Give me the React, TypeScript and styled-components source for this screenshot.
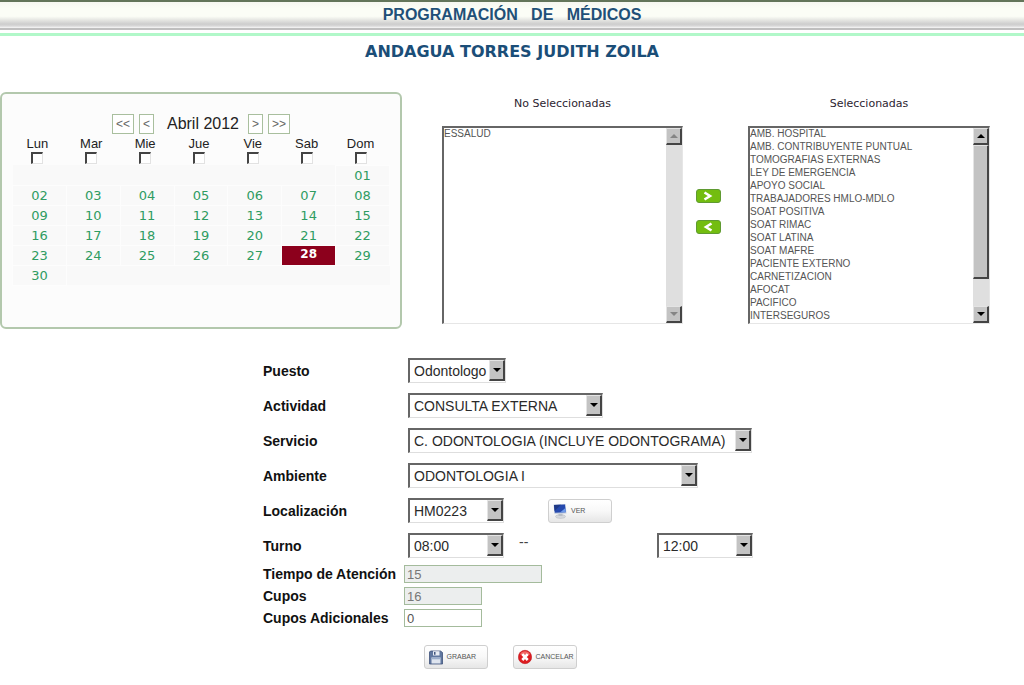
import React, { useState } from "react";
import styled, { createGlobalStyle, css } from "styled-components";

const sans = `"Liberation Sans", Arial, sans-serif`;
const wide = `"DejaVu Sans", Verdana, sans-serif`;

const GlobalStyle = createGlobalStyle`
  *, *::before, *::after { box-sizing: border-box; }
  body { margin: 0; background: #fff; font-family: ${sans}; color: #111; }
  button { font-family: inherit; cursor: pointer; }
`;

const Page = styled.div`
  min-height: 100vh;
`;

const TopBar = styled.header`
  display: flex;
  align-items: center;
  justify-content: center;
  height: 28px;
  border-top: 2px solid #63755a;
  background: linear-gradient(#f6f7f1 0%, #fbfdf6 25%, #fbfdf6 55%, #cdcdcd 85%, #d8d8d8 92%, #f8f8f8 100%);
`;

const Title = styled.h1`
  margin: 0;
  font-size: 16px;
  line-height: 20px;
  font-weight: bold;
  color: #1f5078;
  white-space: pre-wrap;
`;

const Rules = styled.div`
  height: 8px;
  border-top: 2px solid #bfbfbf;
  border-bottom: 3px solid #b1f8c9;
  background: #fff;
`;

const Doctor = styled.h2`
  margin: 0;
  padding: 6px 0 0;
  font-family: ${wide};
  font-size: 16px;
  line-height: 20px;
  text-align: center;
  color: #1b4e78;
`;

const Upper = styled.section`
  display: grid;
  grid-template-columns: 402fr 281fr 65fr 242fr;
  align-items: start;
  padding-right: 34px;
  margin-top: 30px;
`;

const CalendarPanel = styled.section`
  height: 237px;
  padding: 20px 10px 0;
  border: 2px solid #b3c8ad;
  border-radius: 6px;
  background: #fcfcfc;
`;

const MonthNav = styled.div`
  display: flex;
  justify-content: center;
  align-items: center;
  gap: 5px;
  height: 20px;
`;

const NavButton = styled.button`
  height: 20px;
  padding: 0 3px;
  border: 1px solid #a9bf9e;
  background: #fff;
  color: #666;
  font-family: ${sans};
  font-size: 12px;
  line-height: 18px;
`;

const Month = styled.span`
  padding: 0 4px 0 8px;
  font-size: 16px;
  line-height: 20px;
  color: #222;
`;

const Days = styled.table`
  width: 100%;
  table-layout: fixed;
  border-collapse: collapse;
`;

const DayHead = styled.th`
  height: 31px;
  padding: 2px 4px 0 0;
  vertical-align: top;
  font-size: 13px;
  line-height: 16px;
  font-weight: normal;
  color: #222;

  label {
    display: flex;
    flex-direction: column;
    align-items: center;
  }
`;

const Tick = styled.input`
  appearance: none;
  width: 12px;
  height: 12px;
  margin: 0;
  border: 1px solid #e2e2e2;
  border-top: 2px solid #444;
  border-left: 2px solid #444;
  background: #fff;

  &:checked { background: #63755a; }
`;

const DayCell = styled.td<{ $empty?: boolean }>`
  height: 20px;
  padding: 0;
  background: #f9f9f9;
  ${(p) => !p.$empty && css`border: 1px solid #fdfdfd;`}
`;

const DayButton = styled.button<{ $on: boolean }>`
  display: block;
  width: 100%;
  height: 19px;
  padding: 0;
  border: 0;
  background: transparent;
  font-family: ${wide};
  font-size: 13px;
  line-height: 19px;
  color: #2f9c62;
  ${(p) =>
    p.$on &&
    css`
      padding-bottom: 2px;
      background: #8c001c;
      color: #fff;
      font-size: 12px;
      line-height: 17px;
      font-weight: bold;
    `}
`;

const ListColumn = styled.div<{ $indent?: boolean }>`
  display: flex;
  flex-direction: column;
  min-width: 0;
  padding-top: 4px;
  padding-left: ${(p) => (p.$indent ? 40 : 0)}px;
`;

const ListTitle = styled.label`
  margin-bottom: 14px;
  font-family: ${wide};
  font-size: 11px;
  line-height: 16px;
  text-align: center;
  color: #2c2430;
`;

const ListFrame = styled.div`
  display: flex;
  height: 198px;
  border: 1px solid #e6e6e6;
  border-top: 2px solid #666;
  border-left: 2px solid #666;
  background: #fff;
`;

const List = styled.select`
  flex: 1;
  min-width: 0;
  padding: 0;
  border: 0;
  border-radius: 0;
  outline: 0;
  background: #fff;
  font-family: ${sans};
  font-size: 10px;
  scrollbar-width: none;

  option {
    height: 13px;
    min-height: 13px;
    padding: 0;
    line-height: 13px;
    color: #555;
  }
`;

const Scroll = styled.div`
  display: flex;
  flex-direction: column;
  flex: none;
  width: 16px;
  background: #dfdfdf;
`;

const raised = css`
  border: 1px solid #e4e4e4;
  border-right: 2px solid #444;
  border-bottom: 2px solid #444;
  background: #c3c3c3;
`;

const ScrollCap = styled.span`
  display: flex;
  align-items: center;
  justify-content: center;
  height: 17px;
  ${raised}
`;

const ScrollTrack = styled.div`
  flex: 1;
`;

const ScrollThumb = styled.div`
  height: 83%;
  ${raised}
`;

const Movers = styled.div`
  display: flex;
  flex-direction: column;
  align-items: center;
  gap: 17px;
  padding: 97px 15px 0 0;
`;

const MoveButton = styled.button`
  display: flex;
  align-items: center;
  justify-content: center;
  width: 25px;
  height: 14px;
  padding: 0;
  border: 1px solid #5f9a32;
  border-radius: 3px;
  background: #73bd10;
`;

const FormArea = styled.section`
  padding-right: 8px;
`;

const Form = styled.form`
  display: flex;
  flex-direction: column;
  width: 490px;
  max-width: 100%;
  margin: 24px auto 0;
`;

const Row = styled.div<{ $compact?: boolean }>`
  display: grid;
  grid-template-columns: 141px 1fr;
  align-items: center;
  height: ${(p) => (p.$compact ? 22 : 35)}px;
`;

const Label = styled.label`
  font-size: 14px;
  line-height: 20px;
  font-weight: bold;
  color: #111;
  white-space: nowrap;
`;

const Field = styled.div`
  display: flex;
  align-items: center;
  padding-left: 4px;
`;

const SelectFrame = styled.div<{ $width: number; $end?: boolean }>`
  display: flex;
  width: ${(p) => p.$width}px;
  height: 25px;
  padding-bottom: 1px;
  border: 1px solid #dedede;
  border-top: 2px solid #666;
  border-left: 2px solid #666;
  background: #fff;
  ${(p) => p.$end && css`margin-left: auto;`}
`;

const Select = styled.select`
  appearance: none;
  flex: 1;
  min-width: 0;
  padding: 0 0 0 4px;
  border: 0;
  border-radius: 0;
  outline: 0;
  background: transparent;
  font-family: ${sans};
  font-size: 14px;
  line-height: 20px;
  color: #2a2a2a;
`;

const DropCap = styled.span`
  display: flex;
  align-items: center;
  justify-content: center;
  flex: none;
  width: 16px;
  ${raised}
`;

const Dash = styled.span`
  padding: 0 0 8px 15px;
  font-size: 14px;
  line-height: 16px;
  color: #444;
`;

const TextBox = styled.input<{ $width: number }>`
  width: ${(p) => p.$width}px;
  height: 18px;
  padding: 0 2px;
  border: 1px solid #a4bb9c;
  border-radius: 0;
  outline: 0;
  background: #fff;
  font-family: ${sans};
  font-size: 13px;
  line-height: 16px;
  color: #555;

  &:read-only { background: #eceeee; color: #777; }
`;

const ImageButton = styled.button`
  display: flex;
  align-items: center;
  gap: 4px;
  width: 64px;
  height: 24px;
  padding: 0 0 0 4px;
  border: 1px solid #cfcfcf;
  border-radius: 3px;
  background: linear-gradient(#fff 0%, #f8f8f8 50%, #e6e6e6 100%);
  font-size: 7px;
  line-height: 8px;
  color: #555;

  svg { flex: none; }
`;

const ViewButton = styled(ImageButton)`
  margin-left: 44px;
`;

const Actions = styled.div`
  display: flex;
  justify-content: center;
  gap: 25px;
  margin-top: 16px;
  padding: 0 16px 16px 0;
`;

const Arrow = ({ up, dim }: { up?: boolean; dim?: boolean }) => (
  <svg width="8" height="4" viewBox="0 0 8 4" aria-hidden="true">
    <path d={up ? "M0 4L4 0L8 4Z" : "M0 0H8L4 4Z"} fill={dim ? "#858585" : "#000"} />
  </svg>
);

const Chevron = ({ left }: { left?: boolean }) => (
  <svg width="10" height="10" viewBox="0 0 10 10" aria-hidden="true">
    <path
      d={left ? "M8.500 1.500L3 5L8.500 8.500" : "M1.500 1.500L7 5L1.500 8.500"}
      fill="none"
      stroke="#fff"
      strokeWidth="2.6"
    />
  </svg>
);

const MonitorIcon = () => (
  <svg width="14" height="16" viewBox="0 0 14 16" aria-hidden="true">
    <ellipse cx="7.5" cy="13.5" rx="5" ry="1.9" fill="#d5d8dd" stroke="#b4b8be" strokeWidth=".5" />
    <path d="M5.500 10.500h4v2.500h-4z" fill="#b9bec6" />
    <path d="M.5 1.500L12.500 1L13.500 10.500L1.500 11Z" fill="#c7d0df" />
    <path d="M1 2L12 1.500L12.800 9.300L1.800 9.800Z" fill="#2549ae" />
    <path d="M1 2L8 1.700L1.600 8Z" fill="#203a86" />
    <path d="M7 9.500L12.400 5L12.800 9.300Z" fill="#6f9bea" />
  </svg>
);

const DiskIcon = () => (
  <svg width="14" height="15" viewBox="0 0 14 15" aria-hidden="true">
    <path d="M1.500 1H11.500L13.500 2.500V14H.5V2Z" fill="#60779f" stroke="#3f5278" strokeWidth=".8" />
    <path d="M4 1.200H10.500V5.500H4Z" fill="#e9edf4" />
    <path d="M5 2H6.500V4.700H5Z" fill="#42567e" />
    <path d="M2.500 7.500H11.500V13.500H2.500Z" fill="#dfe5ef" />
    <path d="M2.500 7.500H11.500V9.300H2.500Z" fill="#9caecb" />
  </svg>
);

const CancelIcon = () => (
  <svg width="14" height="16" viewBox="0 0 14 16" aria-hidden="true">
    <circle cx="7" cy="8" r="6.700" fill="#dd1c20" stroke="#b90f16" strokeWidth=".5" />
    <path d="M2 5.500A5.500 5.500 0 0 1 12 5.500Q7 7.500 2 5.500Z" fill="#f16b68" />
    <path d="M4.300 5.100L9.700 11M9.700 5.100L4.300 11" stroke="#fff" strokeWidth="2.600" />
  </svg>
);

const weekDays = ["Lun", "Mar", "Mie", "Jue", "Vie", "Sab", "Dom"];
const weeks = Array.from({ length: 6 }, (_, w) =>
  Array.from({ length: 7 }, (_, d) => w * 7 + d - 5)
);

const selectedList = [
  "AMB. HOSPITAL",
  "AMB. CONTRIBUYENTE PUNTUAL",
  "TOMOGRAFIAS EXTERNAS",
  "LEY DE EMERGENCIA",
  "APOYO SOCIAL",
  "TRABAJADORES HMLO-MDLO",
  "SOAT POSITIVA",
  "SOAT RIMAC",
  "SOAT LATINA",
  "SOAT MAFRE",
  "PACIENTE EXTERNO",
  "CARNETIZACION",
  "AFOCAT",
  "PACIFICO",
  "INTERSEGUROS",
];

function Calendar() {
  const [day, setDay] = useState(28);
  return (
    <CalendarPanel>
      <MonthNav>
        <NavButton aria-label="Año anterior">&lt;&lt;</NavButton>
        <NavButton aria-label="Mes anterior">&lt;</NavButton>
        <Month>Abril 2012</Month>
        <NavButton aria-label="Mes siguiente">&gt;</NavButton>
        <NavButton aria-label="Año siguiente">&gt;&gt;</NavButton>
      </MonthNav>
      <Days>
        <thead>
          <tr>
            {weekDays.map((name) => (
              <DayHead key={name} scope="col">
                <label>
                  {name}
                  <Tick type="checkbox" />
                </label>
              </DayHead>
            ))}
          </tr>
        </thead>
        <tbody>
          {weeks.map((week, i) => (
            <tr key={i}>
              {week.map((n) =>
                n < 1 || n > 30 ? (
                  <DayCell key={n} $empty />
                ) : (
                  <DayCell key={n}>
                    <DayButton $on={n === day} onClick={() => setDay(n)}>
                      {String(n).padStart(2, "0")}
                    </DayButton>
                  </DayCell>
                )
              )}
            </tr>
          ))}
        </tbody>
      </Days>
    </CalendarPanel>
  );
}

function ListBox(props: { id: string; title: string; items: string[]; indent?: boolean; scrollable?: boolean }) {
  return (
    <ListColumn $indent={props.indent}>
      <ListTitle htmlFor={props.id}>{props.title}</ListTitle>
      <ListFrame>
        <List id={props.id} multiple size={15}>
          {props.items.map((item) => (
            <option key={item}>{item}</option>
          ))}
        </List>
        <Scroll aria-hidden="true">
          <ScrollCap><Arrow up dim={!props.scrollable} /></ScrollCap>
          <ScrollTrack>{props.scrollable && <ScrollThumb />}</ScrollTrack>
          <ScrollCap><Arrow dim={!props.scrollable} /></ScrollCap>
        </Scroll>
      </ListFrame>
    </ListColumn>
  );
}

function DropDown(props: { id: string; value: string; width: number; end?: boolean; name?: string }) {
  return (
    <SelectFrame $width={props.width} $end={props.end}>
      <Select id={props.id} aria-label={props.name}>
        <option>{props.value}</option>
      </Select>
      <DropCap aria-hidden="true"><Arrow /></DropCap>
    </SelectFrame>
  );
}

const choices = [
  { id: "puesto", label: "Puesto", value: "Odontologo", width: 98 },
  { id: "actividad", label: "Actividad", value: "CONSULTA EXTERNA", width: 195 },
  { id: "servicio", label: "Servicio", value: "C. ODONTOLOGIA (INCLUYE ODONTOGRAMA)", width: 344 },
  { id: "ambiente", label: "Ambiente", value: "ODONTOLOGIA I", width: 290 },
];

export default function App() {
  return (
    <Page>
      <GlobalStyle />
      <TopBar>
        <Title>{"PROGRAMACIÓN   DE   MÉDICOS"}</Title>
      </TopBar>
      <Rules />
      <Doctor>ANDAGUA TORRES JUDITH ZOILA</Doctor>
      <Upper>
        <Calendar />
        <ListBox id="libres" title="No Seleccionadas" items={["ESSALUD"]} indent />
        <Movers>
          <MoveButton aria-label="Agregar"><Chevron /></MoveButton>
          <MoveButton aria-label="Quitar"><Chevron left /></MoveButton>
        </Movers>
        <ListBox id="elegidas" title="Seleccionadas" items={selectedList} scrollable />
      </Upper>
      <FormArea>
        <Form onSubmit={(e) => e.preventDefault()}>
          {choices.map((c) => (
            <Row key={c.id}>
              <Label htmlFor={c.id}>{c.label}</Label>
              <Field>
                <DropDown id={c.id} value={c.value} width={c.width} />
              </Field>
            </Row>
          ))}
          <Row>
            <Label htmlFor="localizacion">Localización</Label>
            <Field>
              <DropDown id="localizacion" value="HM0223" width={96} />
              <ViewButton type="button"><MonitorIcon />VER</ViewButton>
            </Field>
          </Row>
          <Row>
            <Label htmlFor="desde">Turno</Label>
            <Field>
              <DropDown id="desde" value="08:00" width={96} />
              <Dash>--</Dash>
              <DropDown id="hasta" value="12:00" width={96} name="Turno hasta" end />
            </Field>
          </Row>
          <Row $compact>
            <Label htmlFor="tiempo">Tiempo de Atención</Label>
            <TextBox id="tiempo" $width={138} defaultValue="15" readOnly />
          </Row>
          <Row $compact>
            <Label htmlFor="cupos">Cupos</Label>
            <TextBox id="cupos" $width={78} defaultValue="16" readOnly />
          </Row>
          <Row $compact>
            <Label htmlFor="adicionales">Cupos Adicionales</Label>
            <TextBox id="adicionales" $width={78} defaultValue="0" />
          </Row>
          <Actions>
            <ImageButton type="submit"><DiskIcon />GRABAR</ImageButton>
            <ImageButton type="button"><CancelIcon />CANCELAR</ImageButton>
          </Actions>
        </Form>
      </FormArea>
    </Page>
  );
}
